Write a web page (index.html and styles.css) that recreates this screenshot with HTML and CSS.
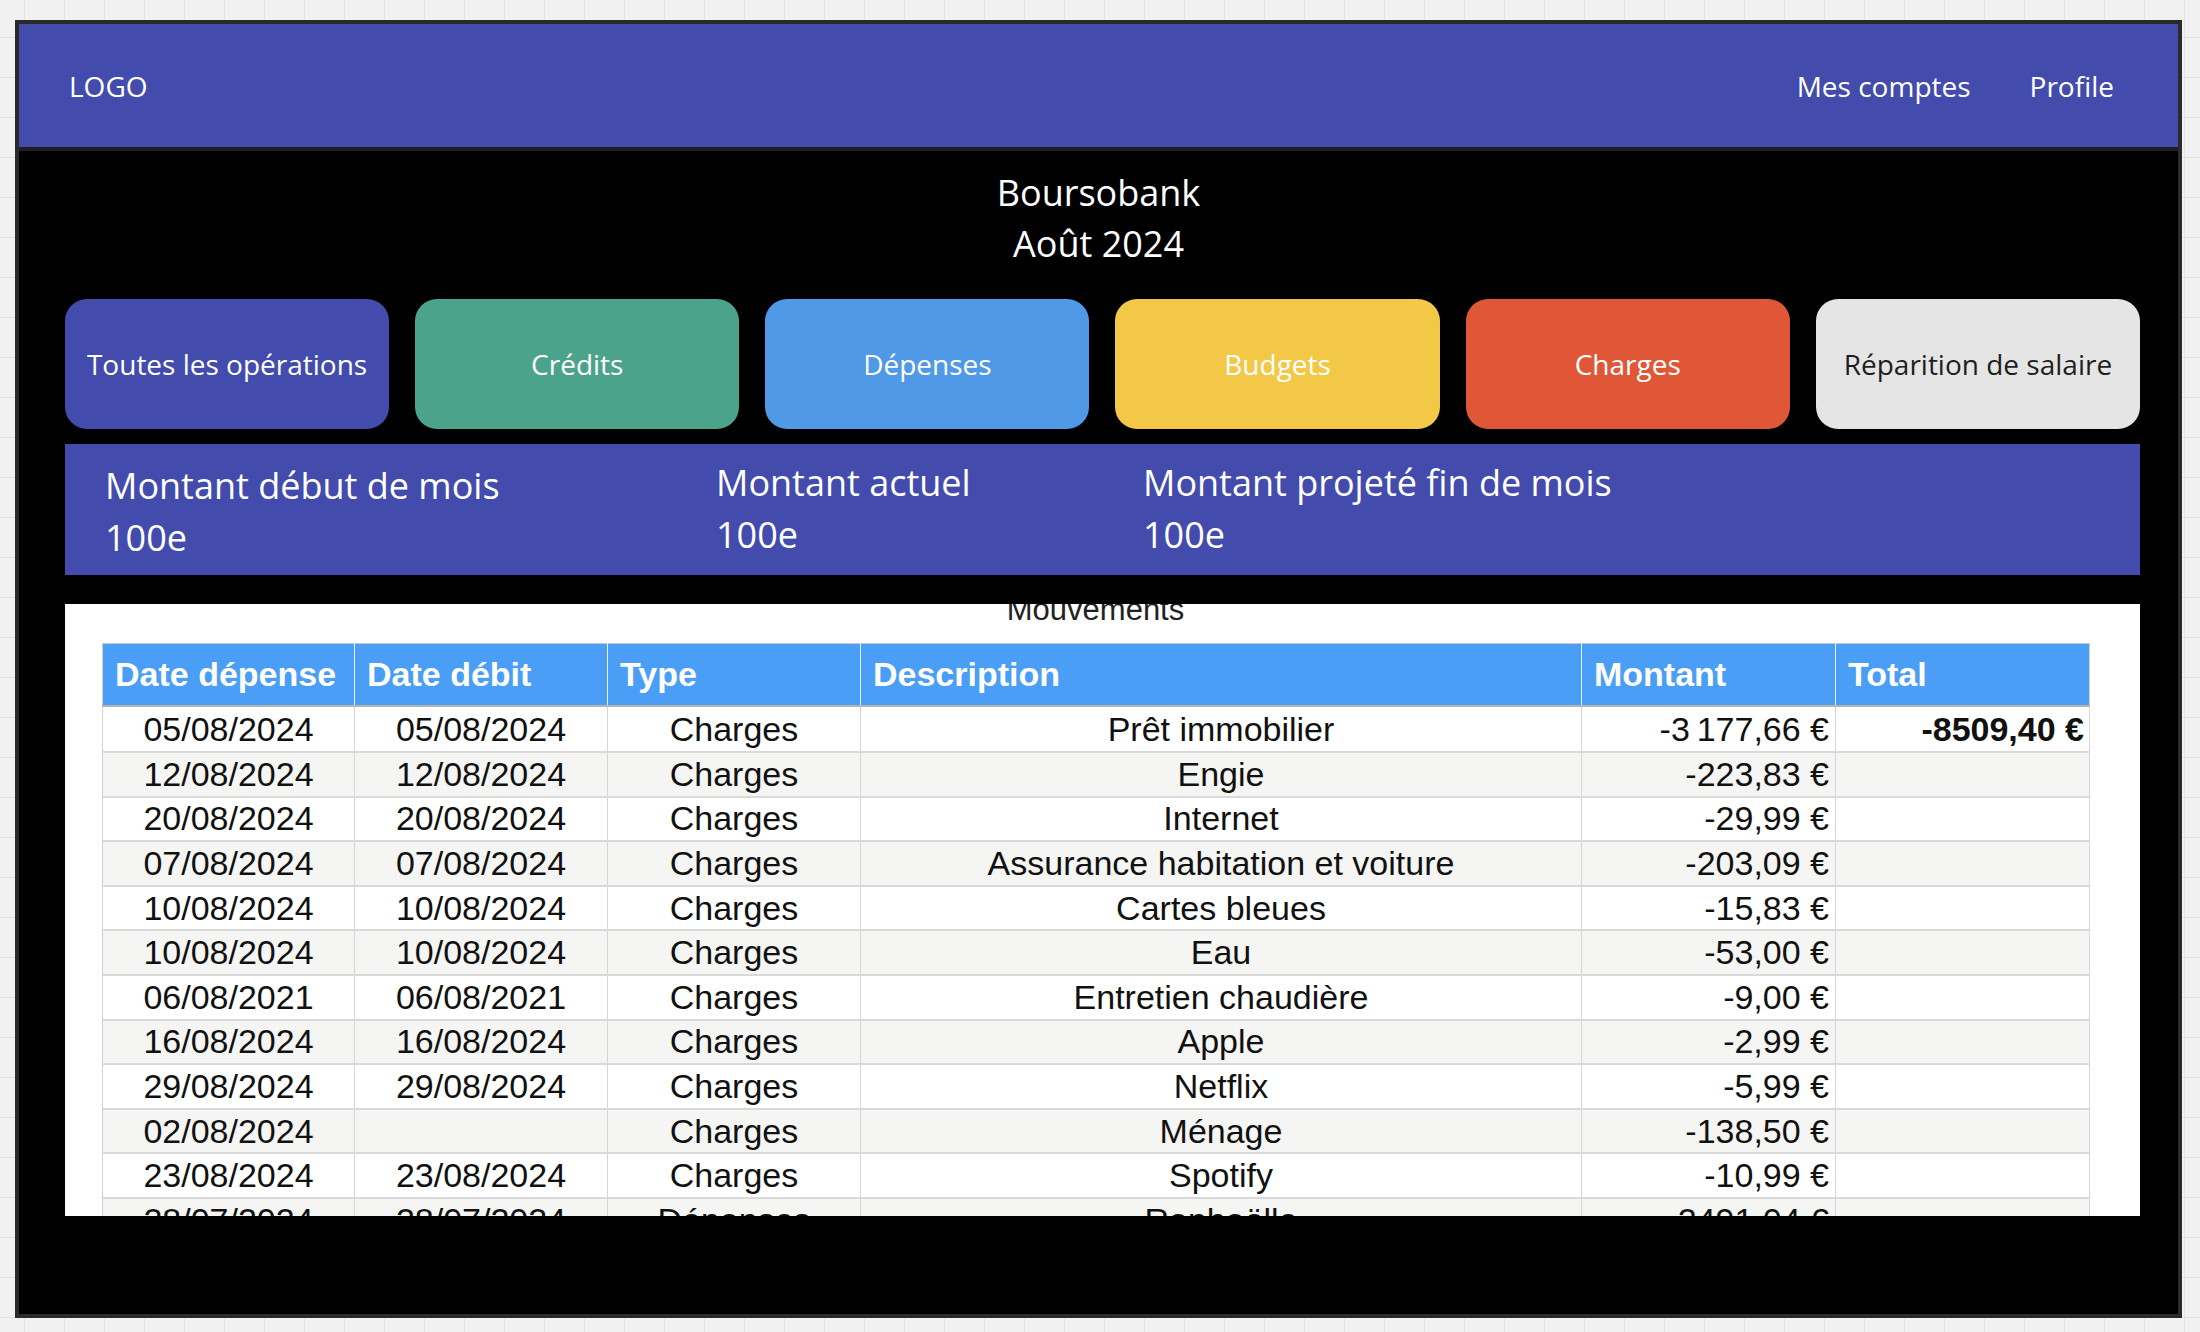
FILE: index.html
```html
<!DOCTYPE html>
<html lang="fr">
<head>
<meta charset="utf-8">
<title>Boursobank – Août 2024</title>
<link rel="stylesheet" href="styles.css">
</head>
<body>
<div class="frame">
  <header class="topbar">
    <div class="logo">LOGO</div>
    <nav class="nav">
      <a href="#">Mes comptes</a>
      <a href="#">Profile</a>
    </nav>
  </header>
  <main class="content">
    <div class="title">
      <div>Boursobank</div>
      <div>Août 2024</div>
    </div>
    <div class="tabs">
      <div class="tab tab-all">Toutes les opérations</div>
      <div class="tab tab-credits">Crédits</div>
      <div class="tab tab-depenses">Dépenses</div>
      <div class="tab tab-budgets">Budgets</div>
      <div class="tab tab-charges">Charges</div>
      <div class="tab tab-salaire">Réparition de salaire</div>
    </div>
    <section class="summary">
      <div class="sum sum-first"><div>Montant début de mois</div><div>100e</div></div>
      <div class="sum"><div>Montant actuel</div><div>100e</div></div>
      <div class="sum"><div>Montant projeté fin de mois</div><div>100e</div></div>
    </section>
    <section class="sheet">
      <div class="sheet-inner">
        <div class="sheet-title">Mouvements</div>
        <table class="grid">
          <colgroup>
            <col class="c-date"><col class="c-date2"><col class="c-type"><col class="c-desc"><col class="c-amount"><col class="c-total">
          </colgroup>
          <thead>
            <tr><th>Date dépense</th><th>Date débit</th><th>Type</th><th>Description</th><th>Montant</th><th>Total</th></tr>
          </thead>
          <tbody>
            <tr class="first"><td>05/08/2024</td><td>05/08/2024</td><td>Charges</td><td>Prêt immobilier</td><td class="num">-3&#8239;177,66 €</td><td class="num total">-8509,40 €</td></tr>
            <tr><td>12/08/2024</td><td>12/08/2024</td><td>Charges</td><td>Engie</td><td class="num">-223,83 €</td><td></td></tr>
            <tr><td>20/08/2024</td><td>20/08/2024</td><td>Charges</td><td>Internet</td><td class="num">-29,99 €</td><td></td></tr>
            <tr><td>07/08/2024</td><td>07/08/2024</td><td>Charges</td><td>Assurance habitation et voiture</td><td class="num">-203,09 €</td><td></td></tr>
            <tr><td>10/08/2024</td><td>10/08/2024</td><td>Charges</td><td>Cartes bleues</td><td class="num">-15,83 €</td><td></td></tr>
            <tr><td>10/08/2024</td><td>10/08/2024</td><td>Charges</td><td>Eau</td><td class="num">-53,00 €</td><td></td></tr>
            <tr><td>06/08/2021</td><td>06/08/2021</td><td>Charges</td><td>Entretien chaudière</td><td class="num">-9,00 €</td><td></td></tr>
            <tr><td>16/08/2024</td><td>16/08/2024</td><td>Charges</td><td>Apple</td><td class="num">-2,99 €</td><td></td></tr>
            <tr><td>29/08/2024</td><td>29/08/2024</td><td>Charges</td><td>Netflix</td><td class="num">-5,99 €</td><td></td></tr>
            <tr><td>02/08/2024</td><td></td><td>Charges</td><td>Ménage</td><td class="num">-138,50 €</td><td></td></tr>
            <tr><td>23/08/2024</td><td>23/08/2024</td><td>Charges</td><td>Spotify</td><td class="num">-10,99 €</td><td></td></tr>
            <tr><td>28/07/2024</td><td>28/07/2024</td><td>Dépenses</td><td>Raphaëlle</td><td class="num">2491,04 €</td><td></td></tr>
          </tbody>
        </table>
      </div>
    </section>
  </main>
</div>
</body>
</html>
```

FILE: styles.css
```css
html, body {
  margin: 0;
  padding: 0;
}

body {
  width: 2200px;
  height: 1332px;
  overflow: hidden;
  background-color: #f1f1f1;
  background-image:
    linear-gradient(to right, #e3e3e3 1px, transparent 1px),
    linear-gradient(to bottom, #e3e3e3 1px, transparent 1px);
  background-size: 40px 40px;
  background-position: 24px 37px;
  font-family: "Open Sans", "Liberation Sans", sans-serif;
}

.frame {
  margin: 20px 18px 14px 15px;
  border: 4px solid #2a2a2a;
  background: #000;
  height: 1290px;
  overflow: hidden;
}

/* ---------- top bar ---------- */
.topbar {
  height: 123px;
  background: #434cad;
  border-bottom: 4px solid #1e1e1e;
  display: flex;
  align-items: center;
  justify-content: space-between;
  padding: 0 64px 0 50px;
  color: #fff;
  font-size: 28px;
}

.nav {
  display: flex;
  gap: 59px;
}

.nav a {
  color: #fff;
  text-decoration: none;
}

/* ---------- content ---------- */
.content {
  padding: 16px 38px 0 46px;
}

.title {
  margin-left: -8px;
  text-align: center;
  color: #fff;
  font-size: 36px;
  line-height: 51px;
}

.tabs {
  margin-top: 30px;
  display: grid;
  grid-template-columns: repeat(6, 1fr);
  gap: 26px;
}

.tab {
  height: 130px;
  border-radius: 22px;
  display: flex;
  align-items: center;
  justify-content: center;
  font-size: 28px;
  color: #fff;
}

.tab-all { background: #434cad; }
.tab-credits { background: #4ca38b; }
.tab-depenses { background: #5099e6; }
.tab-budgets { background: #f2c846; }
.tab-charges { background: #e05738; }
.tab-salaire { background: #e5e5e5; color: #1e1e1e; }

/* ---------- summary band ---------- */
.summary {
  margin-top: 15px;
  height: 131px;
  box-sizing: border-box;
  background: #434cad;
  display: grid;
  grid-template-columns: 611px 427px 1fr;
  padding-left: 40px;
  color: #fff;
  font-size: 36px;
  line-height: 52px;
}

.sum { padding-top: 13px; }
.sum-first { padding-top: 16px; }

/* ---------- spreadsheet ---------- */
.sheet {
  margin-top: 29px;
  height: 612px;
  background: #fff;
  overflow: hidden;
  padding: 0 51px 0 37px;
}

.sheet-inner {
  margin-top: -10px;
  width: 1987px;
}

.sheet-title {
  font-family: "Liberation Sans", Arial, sans-serif;
  font-size: 31px;
  line-height: 32px;
  text-align: center;
  color: #222;
}

.grid {
  margin-top: 17px;
  border-collapse: collapse;
  table-layout: fixed;
  width: 1987px;
  font-family: "Liberation Sans", Arial, sans-serif;
  font-size: 34px;
  color: #111;
  border-left: 1px solid #d0d0d0;
  border-right: 1px solid #d0d0d0;
}

.c-date { width: 252px; }
.c-date2 { width: 253px; }
.c-type { width: 253px; }
.c-desc { width: 721px; }
.c-amount { width: 254px; }
.c-total { width: 254px; }

.grid th {
  height: 61px;
  padding: 0 12px;
  background: #4a9ef5;
  color: #fff;
  font-weight: bold;
  text-align: left;
  border-top: 1px solid #c8c8c8;
  border-right: 1px solid #e8f2fe;
  border-bottom: 2px solid #b5b5b5;
  white-space: nowrap;
}

.grid th:last-child {
  border-right: 1px solid #d0d0d0;
}

.grid tbody tr {
  height: 44.6px;
}

.grid tbody tr.first {
  height: 46px;
}

.grid tbody tr:nth-child(even) {
  background: #f5f5f4;
}

.grid td {
  padding: 0 6px;
  text-align: center;
  white-space: nowrap;
  border-right: 1px solid #d6d6d6;
  border-bottom: 2px solid #d9d9d9;
}

.grid td.num {
  text-align: right;
}

.grid td.total {
  font-weight: bold;
  padding-right: 5px;
}
```
